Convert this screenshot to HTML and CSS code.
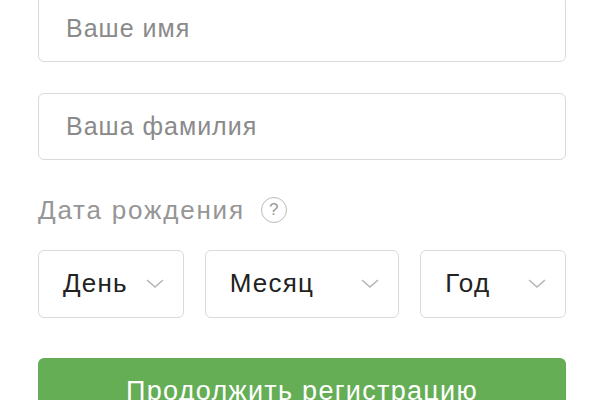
FILE: index.html
```html
<!DOCTYPE html>
<html lang="ru">
<head>
  <meta charset="UTF-8">
  <meta name="viewport" content="width=device-width, initial-scale=1.0">
  <title>Регистрация</title>
  <link rel="stylesheet" href="styles.css">
</head>
<body>

<div class="form">
  <input type="text" class="field" placeholder="Ваше имя">
  <input type="text" class="field" placeholder="Ваша фамилия">

  <div class="label">
    <span>Дата рождения</span>
    <span class="hint">?</span>
  </div>

  <div class="date-row">
    <div class="select day">
      <span>День</span>
      <svg class="chevron" viewBox="0 0 18 9"><path d="M1 1 L9 8 L17 1"/></svg>
    </div>
    <div class="select month">
      <span>Месяц</span>
      <svg class="chevron" viewBox="0 0 18 9"><path d="M1 1 L9 8 L17 1"/></svg>
    </div>
    <div class="select year">
      <span>Год</span>
      <svg class="chevron" viewBox="0 0 18 9"><path d="M1 1 L9 8 L17 1"/></svg>
    </div>
  </div>

  <button class="submit">Продолжить регистрацию</button>
</div>

</body>
</html>
```

FILE: styles.css
```css
body {
  margin: 0;
  background: #fff;
  font-family: "Liberation Sans", Arial, sans-serif;
  overflow: hidden;
}

.form {
  display: flex;
  flex-direction: column;
  padding: 0 34px 0 38px;
  margin-top: -5px;
}

.field {
  height: 67px;
  padding: 0 27px 0;
  border: 1px solid #d9dadd;
  border-radius: 6px;
  font-family: inherit;
  font-size: 25px;
  letter-spacing: 1px;
  color: #222;
  box-sizing: border-box;
  margin-bottom: 31px;
  outline: none;
}

.field::placeholder {
  color: #8a8a8a;
}

.label {
  display: flex;
  align-items: center;
  gap: 16px;
  font-size: 26px;
  letter-spacing: 1.8px;
  color: #969696;
  margin-top: 3px;
  height: 32px;
}

.hint {
  width: 24px;
  height: 24px;
  border: 1.5px solid #bbb;
  border-radius: 50%;
  font-size: 17px;
  letter-spacing: 0;
  color: #9a9a9a;
  display: flex;
  align-items: center;
  justify-content: center;
}

.date-row {
  display: flex;
  gap: 21px;
  margin-top: 24px;
}

.select {
  height: 68px;
  border: 1px solid #d9dadd;
  border-radius: 6px;
  box-sizing: border-box;
  display: flex;
  align-items: center;
  justify-content: space-between;
  padding: 0 19px 1px 24px;
  font-size: 26px;
  letter-spacing: 1.2px;
  color: #222;
}

.day { width: 146px; }
.month { width: 195px; }
.year { width: 146px; }

.chevron {
  width: 18px;
  height: 9px;
  fill: none;
  stroke: #b4b4b4;
  stroke-width: 1.5;
}

.submit {
  margin-top: 40px;
  height: 67px;
  padding-bottom: 2px;
  background: #65ae56;
  border: none;
  border-radius: 6px;
  color: #fff;
  font-family: inherit;
  font-size: 27px;
  letter-spacing: 1.3px;
}
```
